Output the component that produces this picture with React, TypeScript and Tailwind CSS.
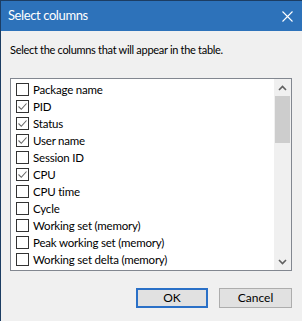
const columns: { name: string; checked: boolean }[] = [
  { name: "Package name", checked: false },
  { name: "PID", checked: true },
  { name: "Status", checked: true },
  { name: "User name", checked: true },
  { name: "Session ID", checked: false },
  { name: "CPU", checked: true },
  { name: "CPU time", checked: false },
  { name: "Cycle", checked: false },
  { name: "Working set (memory)", checked: false },
  { name: "Peak working set (memory)", checked: false },
  { name: "Working set delta (memory)", checked: false },
];

function CheckBox({ checked }: { checked: boolean }) {
  return (
    <span className="flex h-[13px] w-[13px] shrink-0 items-center justify-center border border-[#333333] bg-white">
      {checked && (
        <svg width="11" height="11" viewBox="0 0 11 11" fill="none">
          <path d="M1.5 5.5 L4.3 8.3 L9.5 2.5" stroke="#666666" strokeWidth="1.1" />
        </svg>
      )}
    </span>
  );
}

function Chevron({ up }: { up?: boolean }) {
  return (
    <svg width="9" height="6" viewBox="0 0 9 6" fill="none">
      <path
        d={up ? "M1 5 L4.5 1.5 L8 5" : "M1 1 L4.5 4.5 L8 1"}
        stroke="#606060"
        strokeWidth="1.6"
      />
    </svg>
  );
}

export default function App() {
  return (
    <div
      className="flex h-[321px] w-[302px] flex-col overflow-hidden border-l border-t border-[#1c3d63] bg-[#f0f0f0] text-black"
      style={{ fontFamily: 'Lato, "Noto Sans", sans-serif' }}
    >
      {/* Title bar */}
      <div className="flex h-[30px] shrink-0 items-center justify-between bg-[#2d72ba] pl-[7px] pr-[9px]">
        <span className="text-[13px] tracking-[-0.4px] text-white">Select columns</span>
        <svg width="11" height="11" viewBox="0 0 11 11" fill="none">
          <path d="M0.5 0.5 L10.5 10.5 M10.5 0.5 L0.5 10.5" stroke="white" strokeWidth="1.1" />
        </svg>
      </div>

      <div className="flex flex-1 flex-col px-[9px]">
        <p className="mt-[11px] text-[11px] leading-[16px] tracking-[-0.3px]">
          Select the columns that will appear in the table.
        </p>

        {/* List box */}
        <div className="mt-[20px] flex h-[193px] w-[282px] border border-[#828790] bg-white">
          <div className="flex-1 overflow-hidden pt-[2px]">
            {columns.map((c) => (
              <div key={c.name} className="flex h-[17px] items-center gap-[4px] pl-[5px]">
                <CheckBox checked={c.checked} />
                <span className="whitespace-nowrap text-[11.5px] leading-[17px] tracking-[-0.2px]">
                  {c.name}
                </span>
              </div>
            ))}
            <div className="flex h-[17px] items-center pl-[5px]">
              <CheckBox checked={false} />
            </div>
          </div>
          <div className="flex w-[17px] shrink-0 flex-col items-center bg-[#f0f0f0]">
            <div className="flex h-[17px] items-center justify-center">
              <Chevron up />
            </div>
            <div className="h-[47px] w-[15px] bg-[#cdcdcd]" />
            <div className="flex-1" />
            <div className="flex h-[17px] items-center justify-center">
              <Chevron />
            </div>
          </div>
        </div>

        {/* Buttons */}
        <div className="mt-[17px] flex justify-end gap-[11px] pr-[1px]">
          <button className="h-[20px] w-[72px] border-2 border-[#2a70c7] bg-[#e1e1e1] text-[12px] leading-none">
            OK
          </button>
          <button className="h-[20px] w-[73px] border border-[#adadad] bg-[#e1e1e1] text-[12px] leading-none">
            Cancel
          </button>
        </div>
      </div>
    </div>
  );
}
